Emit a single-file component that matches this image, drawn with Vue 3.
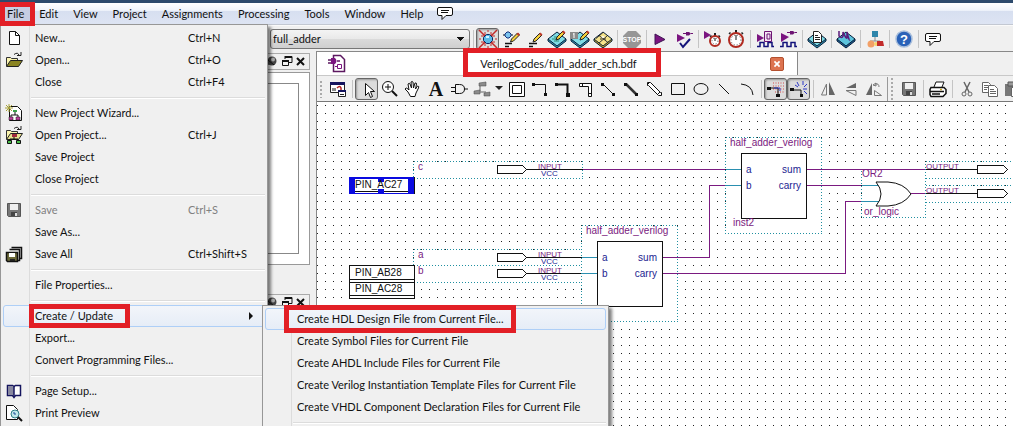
<script setup>
const menus = ['File', 'Edit', 'View', 'Project', 'Assignments', 'Processing', 'Tools', 'Window', 'Help']

const watch = (cx, cy, r) =>
  `<rect x="${cx - 1}" y="${cy - r - 3}" width="2" height="3" fill="#222"/><path d="M${cx - r} ${cy - r + 1}l1.5-1.5M${cx + r} ${cy - r + 1}l-1.5-1.5" stroke="#222" stroke-width="1.5"/><circle cx="${cx}" cy="${cy}" r="${r}" fill="#fff" stroke="#b02a20" stroke-width="2"/><circle cx="${cx}" cy="${cy}" r="${r - 2}" fill="none" stroke="#555" stroke-dasharray="1 2"/><path d="M${cx} ${cy - r + 2}v${r - 2}" stroke="#111"/>`
const chip = (fill, dark) =>
  `<path d="M1 10v2l9 7 9-7v-2z" fill="${dark}" stroke="#08203a"/><path d="M1 10l9-7 9 7-9 7z" fill="${fill}" stroke="#08203a"/>`
const pencil = (x, y) =>
  `<g transform="translate(${x} ${y})"><path d="M1 9l1-3 6-6 2 2-6 6z" fill="#f3cf3c" stroke="#222"/><path d="M7 1l1.5-1.5 2 2-1.5 1.5z" fill="#c0392b"/></g>`
const wave = '<path d="M2 17.5h3v-4h4v4h4v-4h4v4h2" fill="none" stroke="#12127a" stroke-width="1.5"/>'
const plug = (x, y) =>
  `<g transform="translate(${x} ${y})"><path d="M0 2.5h3M8 2.5h2" stroke="#6d1472"/><path d="M3 1h3l2 1.5-2 2H3z" fill="#6d1472"/></g>`
const bubble =
  '<path d="M4 4.5h12q1.500 0 1.500 1.500v5q0 1.500-1.500 1.500h-5l-4 4v-4H4q-1.500 0-1.500-1.500v-5q0-1.500 1.500-1.500z" fill="#fff" stroke="#111"/><path d="M6 7.500h8M6 9.500h7" stroke="#111"/>'
const floppy =
  '<path d="M3.500 3.500h13v13h-12l-1-1z" fill="#777" stroke="#555"/><path d="M6 4h8v6H6z" fill="#efefef"/><path d="M7 12h6v4H7z" fill="#444"/><path d="M11 13h2v3h-2z" fill="#ddd"/>'

const icons = {
  analyze:
    '<path d="M1 1l18 18M19 1L1 19" stroke="#c32a2a" stroke-width="1.500"/><path d="M3 7h4V3M17 7h-4V3M3 13h4v4M17 13h-4v4" fill="none" stroke="#c32a2a"/><path d="M10 1v2M10 17v2M1 10h2M17 10h2" stroke="#c32a2a"/><path d="M8.500 5.500h3l3 3v3l-3 3h-3l-3-3v-3z" fill="#5bb9e6" stroke="#0b2a66"/><path d="M8 7h3v2H8z" fill="#d7f3ff"/>',
  assign: '<path d="M2 6h2M10 6h2" stroke="#111"/><path d="M6 3h2l2 2v2L8 9H6L4 7V5z" fill="#7cc4ee" stroke="#12307e"/><path d="M4 14.500h7M4 17.500h4" stroke="#111" stroke-width="1.500"/>' + pencil(8.5, 4),
  edit: '<path d="M5 14.500h8M5 17.500h4" stroke="#111" stroke-width="1.500"/>' + pencil(8, 4),
  chipEdit: chip('#7fdbe6', '#2f8fb0') + '<path d="M5 10h8M7 8h6M7 12h5" stroke="#2f8f76"/>' + pencil(8, 2),
  chipTag: chip('#7fdbe6', '#2f8fb0') + '<path d="M0 3h8v7H0z" fill="#8b8b8b"/><path d="M4 4v5M3 5h1" stroke="#fff"/>' + pencil(9, 2),
  floor: chip('#f5e38a', '#c9a227') + '<path d="M6 6.500l9 7M10 3.500l-7 6M14 7l-8 7M10 10h3M7 10h2" stroke="#333"/><path d="M8 8l2-1 2 1-2 1z" fill="#fff"/>',
  stop: '<path d="M6 2h8l5 5v7l-5 5H6l-5-5V7z" fill="#969696"/><text x="10" y="13" text-anchor="middle" font-family="Liberation Sans, sans-serif" font-size="7" font-weight="700" fill="#fff">STOP</text>',
  play: '<path d="M4 5l10 5.500-10 5z" fill="#7b1580" stroke="#3f1552"/>',
  playCheck: '<path d="M3 5l8 4-8 4z" fill="#7b1580"/>' + plug(9, 2) + '<path d="M6 14l3 4 7-8" fill="none" stroke="#14147a" stroke-width="2"/>',
  playWatch: '<path d="M1 2l7 4-7 4z" fill="#7b1580"/>' + watch(12, 12, 5),
  watch: watch(10, 11, 7),
  simChip: '<path d="M2 5l7 4-7 4z" fill="#7b1580"/><path d="M9.500 2.500h7v10h-7zM12 5h3v5h-3z" fill="#f4e4f4" stroke="#6d1472"/>' + wave,
  simPlug: '<path d="M3 4l8 4-8 5z" fill="#7b1580"/>' + plug(9, 1) + wave,
  chipPage: chip('#7fdbe6', '#2f8fb0') + '<path d="M6.500 2.500h5l3 3v8h-8z" fill="#fff" stroke="#222"/><path d="M8 6.500h3M8 8.500h5M8 10.500h5" stroke="#222"/>',
  chipWave: chip('#5cc3dc', '#1d5d96') + '<path d="M3 2v5q3 3 4 0V3q3 7 4 6V3q2 9 3 8" fill="none" stroke="#5a1a7a" stroke-width="1.500"/>',
  nodes: '<path d="M10 8v4M5 15v-3h10" fill="none" stroke="#8a8a8a"/><path d="M7 2h6v6H7z" fill="#2e86ab"/><circle cx="6" cy="15" r="3.500" fill="#f2a067"/><circle cx="11" cy="15" r="2" fill="#f7d36a"/><path d="M12 12h6l1 5h-7z" fill="#c22b2b"/>',
  help: '<circle cx="10" cy="10" r="8" fill="#2a62b8" stroke="#a9bfdc" stroke-width="1.500"/><text x="10" y="15" text-anchor="middle" font-family="Liberation Sans, sans-serif" font-size="13" font-weight="700" fill="#fff">?</text>',
  bubble,
  bdf: '<path d="M6.500 1.500h7l4 4v12h-11z" fill="#fff" stroke="#5c1860" stroke-width="1.500"/><path d="M1 6h4M1 9h4M10 7h3" stroke="#5c1860" stroke-width="1.500"/><path d="M4 4h4q3 3 0 6H4z" fill="#7b1580"/><path d="M10.500 10.500h4v4h-4zM8 12.500h2" fill="none" stroke="#7b1580"/>',
  window: '<path d="M2.500 3.500h14v10h-14z" fill="#fff" stroke="#222"/><path d="M2 3h15v3H2z" fill="#14145e"/><path d="M4 9h4v3H4z" fill="#888"/><path d="M9 9q3-3 4 0v2" fill="none" stroke="#b02020" stroke-width="1.500"/><path d="M10.500 11.500h7v6h-7z" fill="#fff" stroke="#222"/><path d="M10 11h8v2h-8z" fill="#14145e"/><path d="M12 15.500h4" stroke="#222"/>',
  pointer: '<path d="M8.500 4.500v12l3-3 2 5 2-1-2-5h4z" fill="#fff" stroke="#111"/>',
  zoom: '<circle cx="8" cy="8" r="5.500" fill="#fff" stroke="#111"/><path d="M12 12l5 5" stroke="#111" stroke-width="2"/><path d="M5 8h6M8 5v6" stroke="#111"/>',
  hand: '<path d="M7.500 17.500L5 13l-3-3q1-2 3 0l1 1-1-6q1.500-1.500 2 0l1.500 4-.5-6q1.500-1 2 0l.5 6 1.500-5q1.500-.5 1.500 1l-1 5 2-3q2 0 1 2l-2.500 5-1 3.500z" fill="#fff" stroke="#111"/>',
  text: '<text x="10" y="17" text-anchor="middle" font-family="Liberation Serif, serif" font-size="20" font-weight="700" fill="#111">A</text>',
  gate: '<path d="M6.500 5.500h4q5 0 5 4.500t-5 4.500h-4zM2 8.500h4M2 12.500h4M15 10h4" fill="none" stroke="#111"/>',
  blocks: '<path d="M8 7v5M5 13h9" fill="none" stroke="#666"/><path d="M7 4l7-1v4H7zM2 12l6-1v4H2zM12 14l6-1v4h-6z" fill="#8b8b8b" stroke="#444" stroke-width=".5"/>',
  block: '<path d="M2.500 3.500h15v14h-15z" fill="#fff" stroke="#111"/><path d="M5.500 6.500h9v8h-9z" fill="#fff" stroke="#111"/>',
  node: '<path d="M3 5.500h12.500v10" fill="none" stroke="#111"/><path d="M2 4h3v3H2zM14 14h3v3h-3z" fill="#111"/>',
  bus: '<path d="M3 5.500h11.500v10" fill="none" stroke="#111" stroke-width="2"/><path d="M2 4h3v3H2zM13 14h4v4h-4z" fill="#111"/>',
  conduit: '<path d="M3.500 4.500h12v13h-3v-10h-9zM12.500 14.500h3M6.500 4.500v3" fill="#fff" stroke="#111"/>',
  dnode: '<path d="M4 5l11 11" stroke="#111"/><path d="M2 4h3v3H2zM13 14h3v3h-3z" fill="#111"/>',
  dbus: '<path d="M4 5l11 11" stroke="#333" stroke-width="2.500"/><path d="M2 4h3v3H2zM13 14h3v3h-3z" fill="#111"/>',
  dconduit: '<path d="M2.500 3.500h3l10 10h1v3h-3l-10-10h-1zM2 6l3-3M12 16l3-3" fill="#fff" stroke="#111"/>',
  rect: '<path d="M3.500 4.500h13v11h-13z" fill="none" stroke="#111"/>',
  oval: '<ellipse cx="10" cy="10" rx="7" ry="5.500" fill="none" stroke="#111"/>',
  line: '<path d="M5 5l10 10" stroke="#111"/>',
  arc: '<path d="M4 5q11 1 12 11" fill="none" stroke="#111"/>',
  rubber: '<path d="M7 4h11M7 7h11M7 10h11M9 13h9" stroke="#d24b4b" stroke-dasharray="1 1.500"/><path d="M3 9h9v7" fill="none" stroke="#111"/><path d="M1 8h4v3H1zM10 15h4v3h-4z" fill="#111"/><path d="M8 9h6v3" fill="none" stroke="#2b36c4"/>',
  partial: '<path d="M8 3l2 4M14 2v4M18 5l-3 3M18 10h-4M18 15l-3-3M6 6l3 2" stroke="#2b36c4"/><path d="M3 11h9v6" fill="none" stroke="#111"/><path d="M1 9h4v3H1zM11 15h3v3h-3z" fill="#111"/>',
  flipH: '<path d="M8.500 5v11h-5z" fill="none" stroke="#777"/><path d="M11 3v13h6z" fill="#666"/>',
  flipV: '<path d="M15 4v5H5z" fill="#666"/><path d="M15 16.500v-5H5z" fill="none" stroke="#777"/>',
  rotate: '<path d="M8 4v12H2z" fill="#666"/><path d="M11 5q4-1 4 3M9 6l3-2v3zM10.500 16.500h7l-7-5z" fill="none" stroke="#777"/>',
  floppy,
  print: '<path d="M6 8l2-5h8l-2 5" fill="#fff" stroke="#111"/><path d="M3 8.500h13l2 2v4l-3 3H3l-1-2v-5z" fill="#fff" stroke="#111" stroke-width="1.500"/><path d="M2 12.500h14M4 15h8" stroke="#111" stroke-width="1.500"/><path d="M12 10.500h2" stroke="#c9a227" stroke-width="1.500"/>',
  cut: '<path d="M7 3l5 10M13 3L8 13" stroke="#666" stroke-width="1.500"/><circle cx="7" cy="15" r="2" fill="none" stroke="#666"/><circle cx="13" cy="15" r="2" fill="none" stroke="#666"/>',
  copy: '<path d="M2.500 3.500h6l2 2v8h-8z" fill="#fff" stroke="#666"/><path d="M4 6.500h4M4 8.500h4M4 10.500h3" stroke="#666"/><path d="M8.500 6.500h6l3 3v8h-9z" fill="#fff" stroke="#666"/><path d="M10 10.500h4M10 12.500h6M10 14.500h6" stroke="#666"/>',
  paste: '<path d="M2 5h13v12H2z" fill="#777"/><path d="M5 3h7v4H5z" fill="#999" stroke="#555"/><path d="M8.500 8.500h9v9h-9z" fill="#fff" stroke="#666"/>',
  newFile: '<path d="M5.500 3.500h6l4 4v9h-10z" fill="#fff" stroke="#111"/><path d="M11.500 3.500v4h4" fill="none" stroke="#111"/>',
  open: '<path d="M2.500 16V7.500h4l1 1h6V11" fill="#fbf5b0" stroke="#333"/><path d="M2.500 16.500l4-6h12l-4 6z" fill="#8a8422" stroke="#222"/><path d="M10 4.500q4-3 5 1M13 5.500h4V2" fill="none" stroke="#222"/>',
  wizard: '<path d="M5.500 3.500h8l4 4v10h-12z" fill="#fff" stroke="#111"/><path d="M2 2l6 6M8 2L2 8M5 1v8M1 5h8" stroke="#a8a23a"/><path d="M11 9v3M7 14v-2h7v2" fill="none" stroke="#111"/><path d="M9 7h4v2H9z" fill="#3aa04a"/><path d="M5 14h4v3H5z" fill="#c040a0" stroke="#111" stroke-width=".5"/><path d="M12 14h4v3h-4z" fill="#c040a0" stroke="#111" stroke-width=".5"/>',
  openProject: '<path d="M2.500 14V5.500h4l1 1h6V9" fill="#fbf5b0" stroke="#333"/><path d="M2.500 14.500l4-6h12l-4 6z" fill="#e9e390" stroke="#222"/><path d="M10 3.500q4-3 5 1M13 4.500h4V1" fill="none" stroke="#222"/><path d="M10 11v4M6 16v-2h8v2" fill="none" stroke="#111"/><path d="M8 9h5v3H8z" fill="#a02a3a"/><path d="M3.500 15.500h4v3h-4zM12.500 15.500h4v3h-4z" fill="#4cc24c" stroke="#111"/>',
  saveAll: '<path d="M7.500 3.500h10v11h-2M5.500 5.500h10v11h-2" fill="#eee" stroke="#111" stroke-width="1.500"/><path d="M2.500 8.500h11v9h-10l-1-1z" fill="#6c6a3a" stroke="#111" stroke-width="1.500"/><path d="M5 9h6v4H5z" fill="#fff"/><path d="M6 15h5v2H6z" fill="#222"/>',
  book: '<path d="M3.500 4.500h5l1.500 1 1.500-1h5v10h-5l-1.500 2-1.500-2h-5z" fill="#fff" stroke="#14145e" stroke-width="1.500"/><path d="M4 5h5l1 1v9l-1-1H4z" fill="#8888a0"/><path d="M10 5v11" stroke="#14145e" stroke-width="1.500"/>',
  preview: '<path d="M2.500 2.500h7l4 4v10h-11z" fill="#fff" stroke="#111"/><circle cx="11" cy="11" r="4" fill="#bfe8ea" stroke="#2e7f88"/><path d="M14 14l4 4" stroke="#111" stroke-width="2"/><path d="M9 10h2v2" fill="none" stroke="#1e4f9a"/>',
  pin: '<path d="M5 13l4-3" stroke="#333" stroke-width="1.500"/><circle cx="10" cy="9" r="4.500" fill="#444"/><circle cx="11" cy="7.500" r="2" fill="#aaa"/><path d="M6 8l6 5" stroke="#111"/>',
  restore: '<path d="M9 4.500h7v6h-3M9 7V4" fill="none" stroke="#111"/><path d="M9 5h7" stroke="#111" stroke-width="2"/><path d="M6.500 8.500h6v5h-6z" fill="#f0f0f0" stroke="#111"/><path d="M6 9h7" stroke="#111" stroke-width="2"/>',
  close: '<path d="M7 6l7 7M14 6l-7 7" stroke="#111" stroke-width="2"/>'
}

const sep = { sep: true }
const mainTools = [
  { i: 'analyze', t: 'Analyze current file', on: true }, { i: 'assign', t: 'Assignment editor' }, { i: 'edit', t: 'Settings' },
  { i: 'chipEdit', t: 'Pin planner' }, { i: 'chipTag', t: 'Device assignments' }, { i: 'floor', t: 'Chip planner' }, sep,
  { i: 'stop', t: 'Stop processing' }, sep, { i: 'play', t: 'Start compilation' }, { i: 'playCheck', t: 'Start analysis' }, sep,
  { i: 'playWatch', t: 'Start timing analyzer' }, { i: 'watch', t: 'Timing analyzer' }, sep,
  { i: 'simChip', t: 'RTL simulation' }, { i: 'simPlug', t: 'Gate level simulation' }, sep,
  { i: 'chipPage', t: 'Compilation report' }, sep, { i: 'chipWave', t: 'Programmer' }, sep, { i: 'nodes', t: 'System builder' }, sep,
  { i: 'help', t: 'Help' }, sep, { i: 'bubble', t: 'Feedback' }
]
const drawTools = [
  { i: 'window', t: 'Detach window' }, sep, { i: 'pointer', t: 'Selection tool', on: true }, { i: 'zoom', t: 'Zoom tool' },
  { i: 'hand', t: 'Hand tool' }, { i: 'text', t: 'Text tool' }, { i: 'gate', t: 'Symbol tool' }, { i: 'blocks', t: 'Pin tool' },
  { arrow: true }, { i: 'block', t: 'Block tool' }, { i: 'node', t: 'Orthogonal node' }, { i: 'bus', t: 'Orthogonal bus' },
  { i: 'conduit', t: 'Orthogonal conduit' }, { i: 'dnode', t: 'Diagonal node' }, { i: 'dbus', t: 'Diagonal bus' },
  { i: 'dconduit', t: 'Diagonal conduit' }, { i: 'rect', t: 'Rectangle' }, { i: 'oval', t: 'Oval' }, { i: 'line', t: 'Line' },
  { i: 'arc', t: 'Arc' }, sep, { i: 'rubber', t: 'Rubberbanding', on: true }, { i: 'partial', t: 'Partial line selection', on: true }, sep,
  { i: 'flipH', t: 'Flip horizontal' }, { i: 'flipV', t: 'Flip vertical' }, { i: 'rotate', t: 'Rotate left' }, { grip: true },
  { i: 'floppy', t: 'Save' }, sep, { i: 'print', t: 'Print' }, sep, { i: 'cut', t: 'Cut' }, { i: 'copy', t: 'Copy' }, { i: 'paste', t: 'Paste' }
]
const fileMenu = [
  { label: 'New...', key: 'Ctrl+N', i: 'newFile' }, { label: 'Open...', key: 'Ctrl+O', i: 'open' }, { label: 'Close', key: 'Ctrl+F4' }, sep,
  { label: 'New Project Wizard...', i: 'wizard' }, { label: 'Open Project...', key: 'Ctrl+J', i: 'openProject' },
  { label: 'Save Project' }, { label: 'Close Project' }, sep,
  { label: 'Save', key: 'Ctrl+S', i: 'floppy', off: true }, { label: 'Save As...' }, { label: 'Save All', key: 'Ctrl+Shift+S', i: 'saveAll' }, sep,
  { label: 'File Properties...' }, sep,
  { label: 'Create / Update', sub: true }, { label: 'Export...' }, { label: 'Convert Programming Files...' }, sep,
  { label: 'Page Setup...', i: 'book' }, { label: 'Print Preview', i: 'preview' }
]
const subMenu = [
  'Create HDL Design File from Current File...', 'Create Symbol Files for Current File', 'Create AHDL Include Files for Current File',
  'Create Verilog Instantiation Template Files for Current File', 'Create VHDL Component Declaration Files for Current File'
]

const inputs = [{ n: 'c', y: 161 }, { n: 'a', y: 249 }, { n: 'b', y: 265 }]
const outputs = [161, 185]
const adders = [{ x: 725, y: 137, inst: 'inst2' }, { x: 581, y: 225 }]
</script>

<template>
  <div class="app">
    <nav class="menubar" aria-label="Main menu">
      <button v-for="m in menus" :key="m" class="top" :class="{ open: m === 'File' }">{{ m }}<i v-if="m === 'File'" class="mark file-mark"></i></button>
      <button class="tool" aria-label="Feedback"><svg class="icon" viewBox="0 0 20 20" v-html="icons.bubble"></svg></button>
    </nav>

    <div class="toolbar main-tools">
      <select class="project" aria-label="Project"><option>full_adder</option></select>
      <i class="sep"></i>
      <template v-for="(b, n) in mainTools" :key="n">
        <i v-if="b.sep" class="sep"></i>
        <button v-else class="tool" :class="{ on: b.on }" :aria-label="b.t"><svg class="icon" viewBox="0 0 20 20" v-html="icons[b.i]"></svg></button>
      </template>
    </div>

    <div class="work">
      <aside class="dock">
        <section v-for="p in 2" :key="p" class="pane" :class="{ first: p === 1 }">
          <header class="pane-head">
            <button v-for="k in ['pin', 'restore', 'close']" :key="k" class="mini" :aria-label="k"><svg class="icon" viewBox="0 0 20 20" v-html="icons[k]"></svg></button>
          </header>
          <div class="pane-body"><div class="pane-inner"></div></div>
        </section>
      </aside>

      <main class="editor">
        <div class="tabs">
          <div class="tab">
            <svg class="icon" viewBox="0 0 20 20" v-html="icons.bdf"></svg>
            <span class="tab-title">VerilogCodes/full_adder_sch.bdf<i class="mark tab-mark"></i></span>
            <button class="tab-close" aria-label="Close tab"><svg viewBox="0 0 14 14"><path d="M4 4l6 6M10 4l-6 6" stroke="#fff" stroke-width="2" /></svg></button>
          </div>
        </div>
        <div class="toolbar draw-tools">
          <i class="grip"></i>
          <template v-for="(b, n) in drawTools" :key="n">
            <i v-if="b.sep" class="sep"></i>
            <i v-else-if="b.grip" class="grip split"></i>
            <button v-else-if="b.arrow" class="tool arrow" aria-label="More pins"><svg viewBox="0 0 8 5"><path d="M0 0h8L4 4z" fill="#222" /></svg></button>
            <button v-else class="tool" :class="{ on: b.on }" :aria-label="b.t"><svg class="icon" viewBox="0 0 20 20" v-html="icons[b.i]"></svg></button>
          </template>
        </div>
        <svg class="canvas">
          <defs>
            <pattern id="dots" x="325" y="105" width="8" height="8" patternUnits="userSpaceOnUse"><rect width="1" height="1" fill="#222" /></pattern>
          </defs>
          <g transform="translate(-317 -102)" shape-rendering="crispEdges">
            <rect x="317" y="102" width="2000" height="2000" fill="url(#dots)" />
            <g v-for="p in inputs" :key="p.n" :transform="`translate(413 ${p.y})`">
              <rect class="bound" x=".5" y=".5" width="169" height="17" />
              <text class="violet" x="5" y="9">{{ p.n }}</text>
              <path class="wire" d="M114 8.500h56" />
              <path class="shape" d="M84.500 4.500h25l4 4-4 4h-25z" />
              <text class="small violet" x="125" y="8">INPUT</text>
              <text class="small navy" x="128" y="15">VCC</text>
            </g>
            <g v-for="y in outputs" :key="y" :transform="`translate(925 ${y})`">
              <rect class="bound" x=".5" y=".5" width="169" height="17" />
              <path class="wire" d="M0 8.500h52" />
              <path class="shape" d="M52.500 4.500h26l4 4-4 4h-26z" />
              <text class="small violet" x="1" y="8">OUTPUT</text>
            </g>
            <g v-for="a in adders" :key="a.x" :transform="`translate(${a.x} ${a.y})`">
              <rect class="bound" x=".5" y=".5" width="96" height="96" />
              <rect class="shape" x="16.500" y="16.500" width="65" height="65" />
              <path class="teal" d="M1 32.500h15M1 48.500h15" />
              <path class="net" d="M82 32.500h15M82 48.500h15" />
              <text class="violet" x="5" y="9">half_adder_verilog</text>
              <text class="navy" x="21" y="36">a</text>
              <text class="navy" x="21" y="52">b</text>
              <text class="navy" x="76" y="36" text-anchor="end">sum</text>
              <text class="navy" x="76" y="52" text-anchor="end">carry</text>
              <text v-if="a.inst" class="violet" x="8" y="89">{{ a.inst }}</text>
            </g>
            <rect class="bound" x="861.500" y="169.500" width="64" height="48" />
            <path class="teal" d="M862 185.500h19M862 201.500h19" />
            <path class="shape gate" d="M876 182h12q16 1 23 12-7 11-23 12h-12q10-12 0-24z" />
            <text class="violet" x="862" y="177">OR2</text>
            <text class="violet" x="864" y="215">or_logic</text>
            <path class="net" d="M583 169.500h142M678 257.500h31.500v-72H725M678 273.500h167.500v-72H861M822 169.500h103M822 185.500h39M911 193.500h14" />

            <rect class="shape" x="349.500" y="177.500" width="65" height="16" />
            <path class="wire" d="M349 191.500h65" />
            <path d="M349 177h65v2h-65zM349 193h65v1h-65zM349 177h6v17h-6zM408 177h6v17h-6zM378 177h6v5h-6zM378 189h6v5h-6z" fill="#0a0ae0" />
            <text class="pin" x="355" y="188">PIN_AC27</text>
            <path class="shape" d="M349.500 265.500h65v33h-65zM349.500 279.500h65M349.500 282.500h65M349.500 295.500h65" />
            <text class="pin" x="355" y="276">PIN_AB28</text>
            <text class="pin" x="355" y="292">PIN_AC28</text>
          </g>
        </svg>
      </main>
    </div>

    <div class="popup file-menu" role="menu" aria-label="File">
      <template v-for="(m, n) in fileMenu" :key="n">
        <hr v-if="m.sep" class="rule">
        <button v-else class="item" :class="{ hot: m.sub }" role="menuitem" :disabled="m.off">
          <span class="slot"><svg v-if="m.i" class="icon" viewBox="0 0 20 20" v-html="icons[m.i]"></svg></span>
          <span class="label">{{ m.label }}</span>
          <span v-if="m.key" class="key">{{ m.key }}</span>
          <svg v-if="m.sub" class="caret" viewBox="0 0 4 8"><path d="M0 0l4 4-4 4z" fill="#111" /></svg>
          <i v-if="m.sub" class="mark update-mark"></i>
        </button>
      </template>
    </div>

    <div class="popup sub-menu" role="menu" aria-label="Create / Update">
      <button v-for="(s, n) in subMenu" :key="s" class="item" :class="{ hot: n === 0 }" role="menuitem">
        <span class="slot"></span><span class="label">{{ s }}</span><i v-if="n === 0" class="mark hdl-mark"></i>
      </button>
      <hr class="rule">
    </div>
  </div>
</template>

<style>
html, body { margin: 0; height: 100%; overflow: hidden; }
#app { height: 100%; }
</style>

<style scoped>
.app { position: relative; display: flex; flex-direction: column; height: 100%; overflow: hidden; background: #f0f0f0; color: #111; font: 11px/14px Lato, "Liberation Sans", sans-serif; font-variant-ligatures: none; }
button { display: block; padding: 0; border: 0; margin: 0; background: none; color: inherit; font: inherit; font-variant-ligatures: none; white-space: nowrap; }
.icon { display: block; flex: none; width: 20px; height: 20px; }
.menubar { display: flex; flex: none; align-items: stretch; height: 21px; border-top: 3px solid #2d4a6d; border-bottom: 1px solid #c3c8d2; background: linear-gradient(#fff, #f0f4fb 35%, #d7dff0 40%, #dde4f3); }
.top { position: relative; padding: 0 8px 0 7px; }
.top.open { background: #c6cde2; }
.menubar .tool { height: 20px; margin-left: 2px; }
.mark { position: absolute; box-sizing: border-box; border: 5px solid #e21f26; pointer-events: none; }
.file-mark { z-index: 4; left: 0; top: -1px; width: 35px; height: 24px; }
.toolbar { display: flex; flex: none; align-items: center; box-sizing: border-box; height: 26px; overflow: hidden; }
.main-tools { padding-left: 270px; border-top: 1px solid #fafafa; }
.project { box-sizing: border-box; flex: none; width: 200px; height: 20px; padding: 0 22px 0 2px; border: 1px solid #777; border-radius: 3px; appearance: none; color: #111; font: inherit; background: conic-gradient(from 315deg at 50% 100%, #111 90deg, transparent 0) no-repeat right 5px center / 8px 4px, linear-gradient(#f4f4f4, #e9e9e9 48%, #dadada 52%, #cfcfcf); }
.sep { flex: none; box-sizing: border-box; width: 6px; height: 18px; background: linear-gradient(#c4c4c4, #c4c4c4) no-repeat 3px 0 / 1px 100%; }
.tool { display: flex; flex: none; align-items: center; justify-content: center; box-sizing: border-box; width: 23px; height: 22px; }
.tool.on { border: 1px solid #666; border-radius: 3px; background: #dcdcdc; box-shadow: inset 1px 1px 2px #999; }
.tool.arrow { width: 12px; }
.arrow svg { width: 8px; height: 5px; }
.grip { flex: none; width: 9px; height: 18px; background: radial-gradient(circle, #aaa 1px, transparent 1px) 2px 0 / 4px 4px repeat-y; }
.grip.split { height: 24px; border-left: 1px solid #999; margin-left: 2px; }
.work { display: flex; flex: 1; min-height: 0; }
.dock { display: flex; flex: none; flex-direction: column; box-sizing: border-box; width: 316px; padding: 2px 6px 0 0; gap: 29px; }
.pane { display: flex; flex: 1; flex-direction: column; gap: 2px; }
.pane.first { flex: none; height: 212px; }
.pane-head { display: flex; box-sizing: border-box; flex: none; height: 17px; align-items: center; justify-content: flex-end; padding-right: 2px; border: 1px solid #aaa; background: #f0f0f0; }
.mini { width: 14px; height: 15px; display: flex; align-items: center; justify-content: center; }
.pane-body { box-sizing: border-box; flex: 1; padding: 10px; border: 1px solid #999; background: #fff; }
.pane-inner { box-sizing: border-box; height: 100%; border: 1px solid #888; }
.editor { display: flex; flex: 1; flex-direction: column; min-width: 0; border-left: 1px solid #888; }
.tabs { flex: none; height: 24px; box-sizing: border-box; border-top: 1px solid #888; }
.tab { display: flex; align-items: center; box-sizing: border-box; width: 481px; height: 100%; padding: 0 13px 0 10px; border-right: 1px solid #888; background: #fff; }
.tab-title { position: relative; flex: 1; text-align: center; }
.tab-mark { left: 116px; top: -9px; width: 198px; height: 29px; z-index: 1; }
.tab-close { width: 14px; height: 14px; border: 1px solid #b4502f; border-radius: 2px; background: #dd7350; }
.tab-close svg { display: block; }
.draw-tools { height: 27px; border-top: 1px solid #c8c8c8; border-bottom: 1px solid #777; }
.canvas { display: block; flex: 1; width: 100%; min-height: 0; background: #fff; font-family: "Liberation Sans", Arial, sans-serif; font-size: 10px; }
.bound { fill: #fff; stroke: #1f8fa0; stroke-dasharray: 1 2; }
.shape { fill: #fff; stroke: #111; }
.gate { shape-rendering: auto; }
.wire { fill: none; stroke: #111; }
.teal { fill: none; stroke: #2a8fb0; }
.net { fill: none; stroke: #7a1a80; }
.violet { fill: #7a1a7e; }
.navy { fill: #1c1c90; }
.pin { fill: #111; }
.small { font-size: 8px; }
.popup { position: absolute; box-sizing: border-box; padding: 2px; border: 1px solid #979797; background: linear-gradient(#dcdcdc, #dcdcdc) no-repeat 28px 0 / 1px 100%, #f0f0f0; box-shadow: 3px 3px 3px rgba(0, 0, 0, .5); }
.file-menu { z-index: 2; left: 0; top: 24px; width: 268px; }
.sub-menu { z-index: 3; left: 262px; top: 305px; width: 347px; padding-bottom: 24px; }
.item { position: relative; display: flex; align-items: center; box-sizing: border-box; width: 100%; height: 22px; border: 1px solid transparent; border-radius: 3px; text-align: left; }
.item:disabled { color: #808080; }
.item.hot { border-color: #aecff7; background: linear-gradient(#f2f5fa, #e6edf7); }
.slot { flex: none; width: 31px; }
.file-menu .label { flex: none; width: 153px; }
.caret { width: 4px; height: 8px; margin-left: 61px; }
.rule { height: 1px; margin: 4px 0 3px 28px; border: 0; border-top: 1px solid #dcdcdc; background: #fff; }
.update-mark { left: 25px; top: -2px; width: 101px; height: 24px; }
.hdl-mark { left: 18px; top: -4px; width: 232px; height: 28px; }
</style>
